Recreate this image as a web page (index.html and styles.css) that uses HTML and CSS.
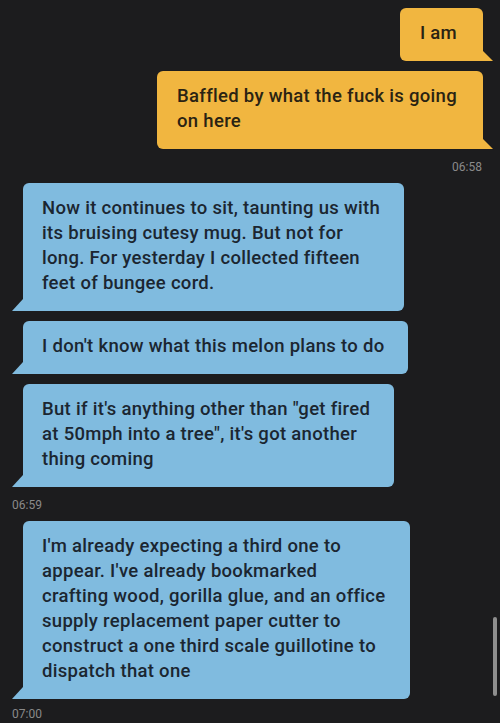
FILE: index.html
```html
<!DOCTYPE html>
<html>
<head>
  <title>Chat</title>
<link rel="stylesheet" href="styles.css">
</head>
<body>
  <div class="chat">
    <div class="msg out">I am</div>
    <div class="msg out">Baffled by what the fuck is going<br>on here</div>
    <div class="time right">06:58</div>

    <div class="msg in">Now it continues to sit, taunting us with<br>its bruising cutesy mug. But not for<br>long. For yesterday I collected fifteen<br>feet of bungee cord.</div>
    <div class="msg in">I don't know what this melon plans to do</div>
    <div class="msg in">But if it's anything other than "get fired<br>at 50mph into a tree", it's got another<br>thing coming</div>
    <div class="time">06:59</div>

    <div class="msg in">I'm already expecting a third one to<br>appear. I've already bookmarked<br>crafting wood, gorilla glue, and an office<br>supply replacement paper cutter to<br>construct a one third scale guillotine to<br>dispatch that one</div>
    <div class="time last">07:00</div>
  </div>
  <div class="scrollbar"></div>
</body>
</html>
```

FILE: styles.css
```css
* {
  margin: 0;
  padding: 0;
  box-sizing: border-box;
}

body {
  font-family: Roboto, "Liberation Sans", sans-serif;
  background-color: #1c1c1e;
  height: 723px;
  overflow: hidden;
}

.chat {
  display: flex;
  flex-direction: column;
  gap: 10px;
  padding: 8px 17px 0 23px;
}

.msg {
  position: relative;
  font-size: 18.5px;
  font-weight: 500;
  letter-spacing: 0.3px;
  line-height: 25px;
  padding: 13px 24px 15px 19px;
  border-radius: 6px;
  white-space: nowrap;
}

.msg.out {
  align-self: flex-end;
  background-color: #f1b640;
  color: #2a2313;
  padding: 13px 26px 15px 20px;
  border-bottom-right-radius: 0;
}

.msg.out::after {
  content: "";
  position: absolute;
  right: -10px;
  bottom: 0;
  width: 10px;
  height: 10px;
  background-color: #f1b640;
  clip-path: polygon(0 0, 100% 100%, 0 100%);
}

.msg.in {
  align-self: flex-start;
  background-color: #80bbdf;
  color: #1b2631;
  border-bottom-left-radius: 0;
}

.msg.in::after {
  content: "";
  position: absolute;
  left: -11px;
  bottom: 0;
  width: 11px;
  height: 12px;
  background-color: #80bbdf;
  clip-path: polygon(100% 0, 100% 100%, 0 100%);
}

.time {
  font-size: 12px;
  line-height: 16px;
  color: #8a8a8a;
  margin-left: -11px;
  margin-bottom: -2px;
}

.time.right {
  align-self: flex-end;
  margin-left: 0;
  margin-right: 1px;
}

.time.last {
  margin-top: -3px;
}

.scrollbar {
  position: fixed;
  right: 3px;
  top: 617px;
  width: 4px;
  height: 79px;
  border-radius: 2px;
  background-color: #8e8e8e;
}
```
